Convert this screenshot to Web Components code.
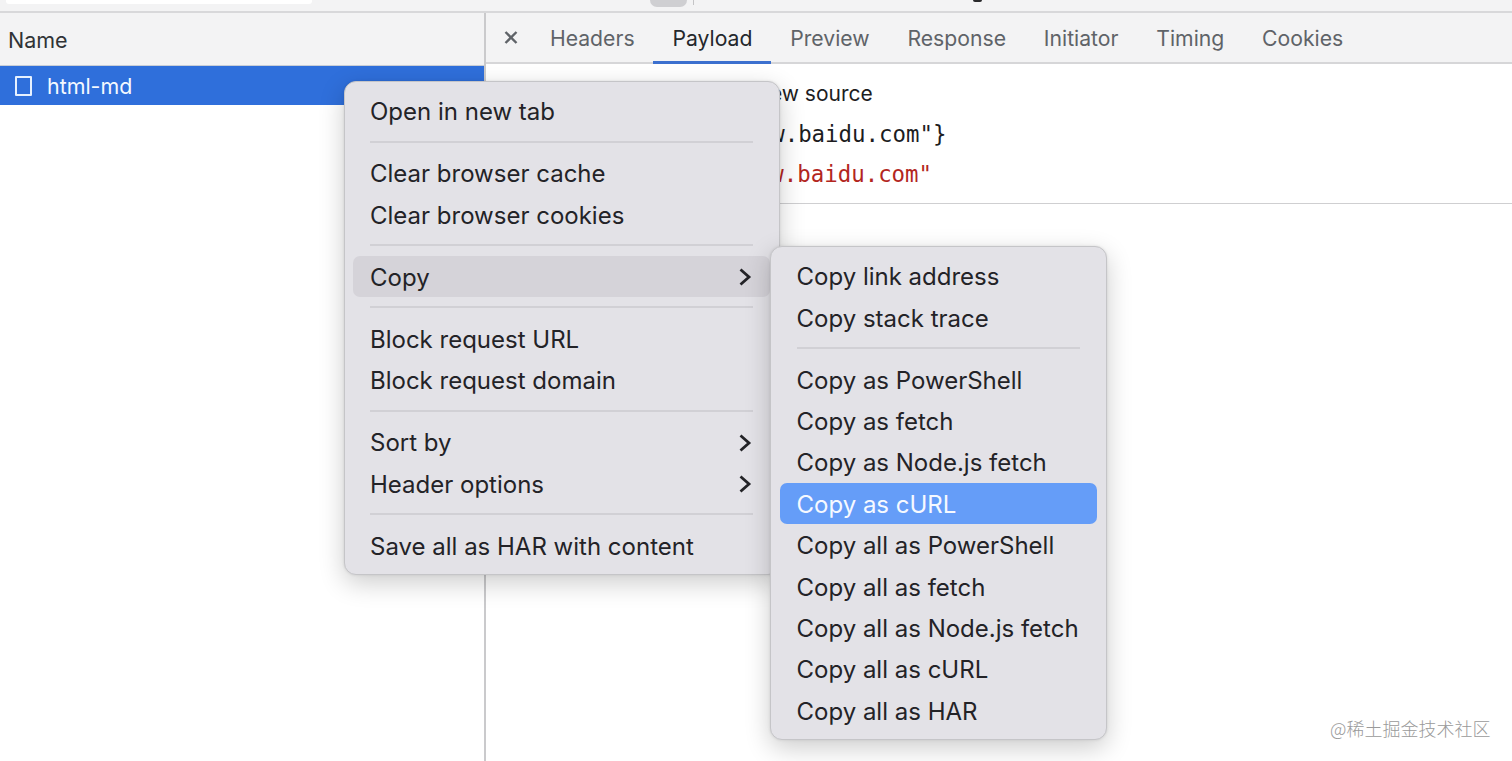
<!DOCTYPE html>
<html><head><meta charset="utf-8"><style>
html,body{margin:0;padding:0;background:#fff;overflow:hidden}
body{font-family:Inter,"Liberation Sans",sans-serif}
</style></head><body>
<template id="t-app"><style>
:host{display:flex;flex-direction:column;width:1512px;height:761px;position:relative;overflow:hidden;background:#fff}
.main{flex:1;display:flex;min-height:0}
.wm{position:absolute;left:1330px;top:716px;font:300 18px/24px "Noto Sans CJK SC",sans-serif;color:#9a9a9a;white-space:nowrap}
</style><slot name="top"></slot><div class="main"><slot name="left"></slot><slot name="right"></slot></div><slot name="over"></slot><div class="wm">@稀土掘金技术社区</div></template>

<template id="t-top"><style>
:host{display:block;height:13px;box-sizing:border-box;background:#f3f3f4;border-bottom:2px solid #d8d8da;position:relative;flex:none}
.a,.b,.c,.d{position:absolute;top:0}
.a{left:6px;width:306px;height:4px;background:#fff;border-radius:0 0 3px 3px}
.b{left:650px;width:37px;height:7px;background:#cfcfd2;border-radius:0 0 9px 9px}
.c{left:693px;width:1px;height:5px;background:#c4c4c6}
.d{left:973px;width:9px;height:2px;background:#2a2a2c;border-radius:0 0 5px 5px}
</style><div class="a"></div><div class="b"></div><div class="c"></div><div class="d"></div></template>

<template id="t-left"><style>
:host{display:block;width:484px;flex:none;border-right:2px solid #cacacc;background:#fff;box-sizing:content-box}
.h{height:53px;box-sizing:border-box;background:#f3f3f4;border-bottom:1px solid #c9ced6;display:flex;align-items:center;padding:2px 8px 0;font-size:21.5px;color:#303336}
.r{height:39px;background:#2f6fdb;color:#f4f9ff;display:flex;align-items:center;gap:15px;padding-left:15px;font-size:21.4px}
.i{width:17px;height:20px;box-sizing:border-box;border:2px solid #e6f1ff;border-radius:1px}
</style><div class="h"><slot name="head"></slot></div><div class="r"><span class="i"></span><slot name="row"></slot></div></template>

<template id="t-right"><style>
:host{display:block;flex:1;min-width:0}
.tabs{height:51px;box-sizing:border-box;background:#f3f3f4;border-bottom:2px solid #d6d6d8;display:flex;align-items:stretch;padding-left:16px}
.x{width:29px;display:flex;align-items:center;padding-top:1px;box-sizing:border-box}
.body{padding:10px 0 0}
</style><div class="tabs"><div class="x"><svg width="18" height="18" viewBox="0 0 18 18"><path d="M3.5 3l11 11M14.5 3l-11 11" stroke="#5f6368" stroke-width="2.4" fill="none"/></svg></div><slot name="tabs"></slot></div><div class="body"><slot></slot></div></template>

<template id="t-tab"><style>
:host{display:flex;align-items:center;padding:1px 18.9px 0;margin-bottom:-2px;font-size:21.2px;color:#5f6368;white-space:nowrap;box-sizing:border-box;border-bottom:3px solid transparent}
:host([active]){color:#24272b;border-bottom-color:#3c70cf}
</style><slot></slot></template>

<template id="t-line"><style>
:host{display:block;height:40px;line-height:40px;white-space:nowrap;color:#1d1d1f}
:host([src]){font-size:21px}
:host([mono]){font:22.4px/40px "DejaVu Sans Mono",monospace}
:host([red]){color:#b3261e}
</style><slot></slot></template>

<template id="t-rule"><style>:host{display:block;height:1px;background:#cfcfd1;margin-top:9px}</style></template>

<template id="t-menu"><style>
:host{position:absolute;display:block;box-sizing:border-box;background:#e3e2e7;border:1px solid #c5c5c8;border-radius:12px;padding:8px 9px 7px;box-shadow:0 8px 26px rgba(0,0,0,.2),0 0 3px rgba(0,0,0,.1)}
</style><slot></slot></template>

<template id="t-item"><style>
:host{display:flex;align-items:center;justify-content:space-between;height:41.4px;box-sizing:border-box;padding:2px 17px 0 var(--pl,17px);border-radius:7px;font-size:24px;color:#232327;white-space:nowrap}
:host([hover]){background:#d5d3d9}
:host([sel]){background:#659df8;color:#f6f9ff}
svg{display:block;margin-right:1px}
</style><span><slot></slot></span><svg part="arrow" width="14" height="20" viewBox="0 0 14 20" hidden><path d="M2.5 2.5l8.5 7.5-8.5 7.5" fill="none" stroke="#232327" stroke-width="2.8"/></svg></template>

<template id="t-sep"><style>
:host{display:flex;align-items:center;height:20.7px;padding:0 17px 0 var(--pl,17px)}
i{display:block;flex:1;height:2px;background:#d1d0d5}
</style><i></i></template>

<dt-app>
 <dt-top slot="top"></dt-top>
 <dt-left slot="left"><span slot="head">Name</span><span slot="row">html-md</span></dt-left>
 <dt-right slot="right">
  <dt-tab slot="tabs">Headers</dt-tab><dt-tab slot="tabs" active>Payload</dt-tab><dt-tab slot="tabs">Preview</dt-tab><dt-tab slot="tabs">Response</dt-tab><dt-tab slot="tabs">Initiator</dt-tab><dt-tab slot="tabs">Timing</dt-tab><dt-tab slot="tabs">Cookies</dt-tab>
  <dt-line src style="padding-left:267px">view source</dt-line>
  <dt-line mono style="padding-left:56px">{url: "https://www.baidu.com"}</dt-line>
  <dt-line mono red style="padding-left:136px">"https://www.baidu.com"</dt-line>
  <dt-rule></dt-rule>
 </dt-right>
 <dt-menu slot="over" style="left:344px;top:81px;width:436px;height:494px;padding-left:8px">
  <dt-item>Open in new tab</dt-item><dt-sep></dt-sep>
  <dt-item>Clear browser cache</dt-item><dt-item>Clear browser cookies</dt-item><dt-sep></dt-sep>
  <dt-item hover arrow>Copy</dt-item><dt-sep></dt-sep>
  <dt-item>Block request URL</dt-item><dt-item>Block request domain</dt-item><dt-sep></dt-sep>
  <dt-item arrow>Sort by</dt-item><dt-item arrow>Header options</dt-item><dt-sep></dt-sep>
  <dt-item>Save all as HAR with content</dt-item>
 </dt-menu>
 <dt-menu slot="over" style="left:770px;top:246px;width:337px;height:494px;--pl:16.5px">
  <dt-item>Copy link address</dt-item><dt-item>Copy stack trace</dt-item><dt-sep></dt-sep>
  <dt-item>Copy as PowerShell</dt-item><dt-item>Copy as fetch</dt-item><dt-item>Copy as Node.js fetch</dt-item><dt-item sel>Copy as cURL</dt-item>
  <dt-item>Copy all as PowerShell</dt-item><dt-item>Copy all as fetch</dt-item><dt-item>Copy all as Node.js fetch</dt-item><dt-item>Copy all as cURL</dt-item><dt-item>Copy all as HAR</dt-item>
 </dt-menu>
</dt-app>
<script>
const map={'dt-app':'t-app','dt-top':'t-top','dt-left':'t-left','dt-right':'t-right','dt-tab':'t-tab','dt-line':'t-line','dt-rule':'t-rule','dt-menu':'t-menu','dt-item':'t-item','dt-sep':'t-sep'};
for(const [n,t] of Object.entries(map)){
 customElements.define(n,class extends HTMLElement{
  constructor(){super();const s=this.attachShadow({mode:'open'});s.appendChild(document.getElementById(t).content.cloneNode(true));
   if(n==='dt-item'&&this.hasAttribute('arrow'))s.querySelector('svg').removeAttribute('hidden');
   if(n==='dt-item'&&!this.hasAttribute('arrow'))s.querySelector('svg').remove();}
 });
}
</script>
</body></html>
